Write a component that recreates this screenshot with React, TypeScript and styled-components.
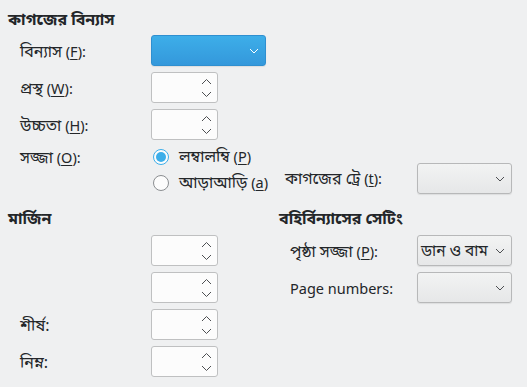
import styled, { createGlobalStyle } from "styled-components";

const GlobalStyle = createGlobalStyle`
  html, body {
    margin: 0;
    padding: 0;
    background: #eff0f1;
  }
  body {
    font-family: "Noto Sans", "Noto Sans Bengali", "Lohit Bengali", sans-serif;
    font-size: 14.5px;
    color: #232629;
  }
`;

const Page = styled.div`
  width: 527px;
  height: 387px;
  box-sizing: border-box;
  padding: 8px 15px 0 8px;
  display: flex;
  flex-direction: column;
  overflow: hidden;
`;

const Heading = styled.div`
  font-weight: 700;
  height: 22px;
  line-height: 22px;
  white-space: nowrap;
`;

// Bengali runs render wider in the reference than the installed Bengali face
const Bn = styled.span<{ $size?: number }>`
  font-size: ${({ $size }) => $size ?? 16}px;
`;

const FormatGrid = styled.div`
  display: grid;
  grid-template-columns: 131px 128px 138px 95px;
  grid-template-rows: 31px 31px 31px auto;
  row-gap: 6px;
  margin: 5px 0 0 12px;
`;

const Label = styled.div<{ $top?: boolean }>`
  display: flex;
  align-items: ${({ $top }) => ($top ? "flex-start" : "center")};
  line-height: 22px;
  white-space: pre;
`;

const U = styled.span`
  text-decoration: underline;
  text-underline-offset: 2px;
`;

const Field = styled.div`
  grid-column: 2 / 5;
`;

const Combo = styled.div<{ $active?: boolean; $w: number }>`
  box-sizing: border-box;
  width: ${({ $w }) => $w}px;
  height: 31px;
  border-radius: 3px;
  border: 1px solid ${({ $active }) => ($active ? "#2f8fd0" : "#b7b8b9")};
  background: ${({ $active }) =>
    $active
      ? "linear-gradient(#3daee9, #3498db)"
      : "linear-gradient(#f2f3f3, #e6e7e8)"};
  box-shadow: 0 1px 1px rgba(0, 0, 0, 0.08);
  display: flex;
  align-items: center;
  justify-content: space-between;
  padding: 0 6px 0 3px;
  white-space: nowrap;
  color: #232629;
`;

const Spin = styled.div`
  box-sizing: border-box;
  width: 67px;
  height: 31px;
  border-radius: 3px;
  border: 1px solid #bfc0c1;
  background: #fcfcfc;
  display: flex;
  justify-content: flex-end;
  align-items: center;
  padding-right: 5px;
`;

const RadioGroup = styled.div`
  display: flex;
  flex-direction: column;
  gap: 4px;
  margin-left: 2px;
`;

const RadioRow = styled.div`
  display: flex;
  align-items: center;
  gap: 10px;
  height: 22px;
  white-space: pre;
`;

const RadioDot = styled.span<{ $on?: boolean }>`
  box-sizing: border-box;
  width: 16px;
  height: 16px;
  border-radius: 50%;
  border: 1px solid ${({ $on }) => ($on ? "#3daee9" : "#8b8e91")};
  background: #fcfcfc;
  display: flex;
  align-items: center;
  justify-content: center;
  &::after {
    content: "";
    display: ${({ $on }) => ($on ? "block" : "none")};
    width: 10px;
    height: 10px;
    border-radius: 50%;
    background: #3daee9;
  }
`;

const TrayCell = styled.div`
  grid-column: 3 / 5;
  align-self: end;
  display: flex;
  align-items: center;
  padding-left: 6px;
`;

const TrayLabel = styled.div`
  width: 132px;
  white-space: pre;
`;

const Bottom = styled.div`
  display: grid;
  grid-template-columns: 271px 233px;
  margin-top: 13px;
`;

const Section = styled.div`
  display: flex;
  flex-direction: column;
`;

const MarginGrid = styled.div`
  display: grid;
  grid-template-columns: 131px 67px;
  grid-auto-rows: 31px;
  row-gap: 6px;
  margin: 6px 0 0 12px;
`;

const LayoutGrid = styled.div`
  display: grid;
  grid-template-columns: 127px 95px;
  grid-auto-rows: 31px;
  row-gap: 6px;
  margin: 6px 0 0 11px;
`;

const Chevron = ({ light }: { light?: boolean }) => (
  <svg width="10" height="6" viewBox="0 0 10 6">
    <path
      d="M1 1 L5 5 L9 1"
      fill="none"
      stroke={light ? "#ffffff" : "#4d4f52"}
      strokeWidth="1"
    />
  </svg>
);

const SpinArrows = () => (
  <svg width="11" height="20" viewBox="0 0 11 20">
    <path d="M1 6 L5.5 1.5 L10 6" fill="none" stroke="#4d4f52" strokeWidth="1" />
    <path d="M1 14 L5.5 18.5 L10 14" fill="none" stroke="#4d4f52" strokeWidth="1" />
  </svg>
);

const SpinBox = () => (
  <Spin>
    <SpinArrows />
  </Spin>
);

export default function App() {
  return (
    <Page>
      <GlobalStyle />
      <Heading>
        <Bn>কাগজের বিন্যাস</Bn>
      </Heading>
      <FormatGrid>
        <Label>
          <Bn>বিন্যাস</Bn> (<U>F</U>):
        </Label>
        <Field>
          <Combo $active $w={115}>
            <span />
            <Chevron light />
          </Combo>
        </Field>

        <Label>
          <Bn>প্রস্থ</Bn> (<U>W</U>):
        </Label>
        <Field>
          <SpinBox />
        </Field>

        <Label>
          <Bn>উচ্চতা</Bn> (<U>H</U>):
        </Label>
        <Field>
          <SpinBox />
        </Field>

        <Label $top>
          <Bn>সজ্জা</Bn> (<U>O</U>):
        </Label>
        <RadioGroup>
          <RadioRow>
            <RadioDot $on />
            <span>
              <Bn>লম্বালম্বি</Bn> (<U>P</U>)
            </span>
          </RadioRow>
          <RadioRow>
            <RadioDot />
            <span>
              <Bn>আড়াআড়ি</Bn> (<U>a</U>)
            </span>
          </RadioRow>
        </RadioGroup>
        <TrayCell>
          <TrayLabel>
            <Bn>কাগজের ট্রে</Bn> (<U>t</U>):
          </TrayLabel>
          <Combo $w={95}>
            <span />
            <Chevron />
          </Combo>
        </TrayCell>
      </FormatGrid>

      <Bottom>
        <Section>
          <Heading>
            <Bn>মার্জিন</Bn>
          </Heading>
          <MarginGrid>
            <Label />
            <SpinBox />
            <Label />
            <SpinBox />
            <Label>
              <Bn>শীর্ষ:</Bn>
            </Label>
            <SpinBox />
            <Label>
              <Bn>নিম্ন:</Bn>
            </Label>
            <SpinBox />
          </MarginGrid>
        </Section>
        <Section>
          <Heading>
            <Bn>বহির্বিন্যাসের সেটিং</Bn>
          </Heading>
          <LayoutGrid>
            <Label>
              <Bn>পৃষ্ঠা সজ্জা</Bn> (<U>P</U>):
            </Label>
            <Combo $w={95}>
              <Bn $size={15.5}>ডান ও বাম</Bn>
              <Chevron />
            </Combo>
            <Label>Page numbers:</Label>
            <Combo $w={95}>
              <span />
              <Chevron />
            </Combo>
          </LayoutGrid>
        </Section>
      </Bottom>
    </Page>
  );
}
